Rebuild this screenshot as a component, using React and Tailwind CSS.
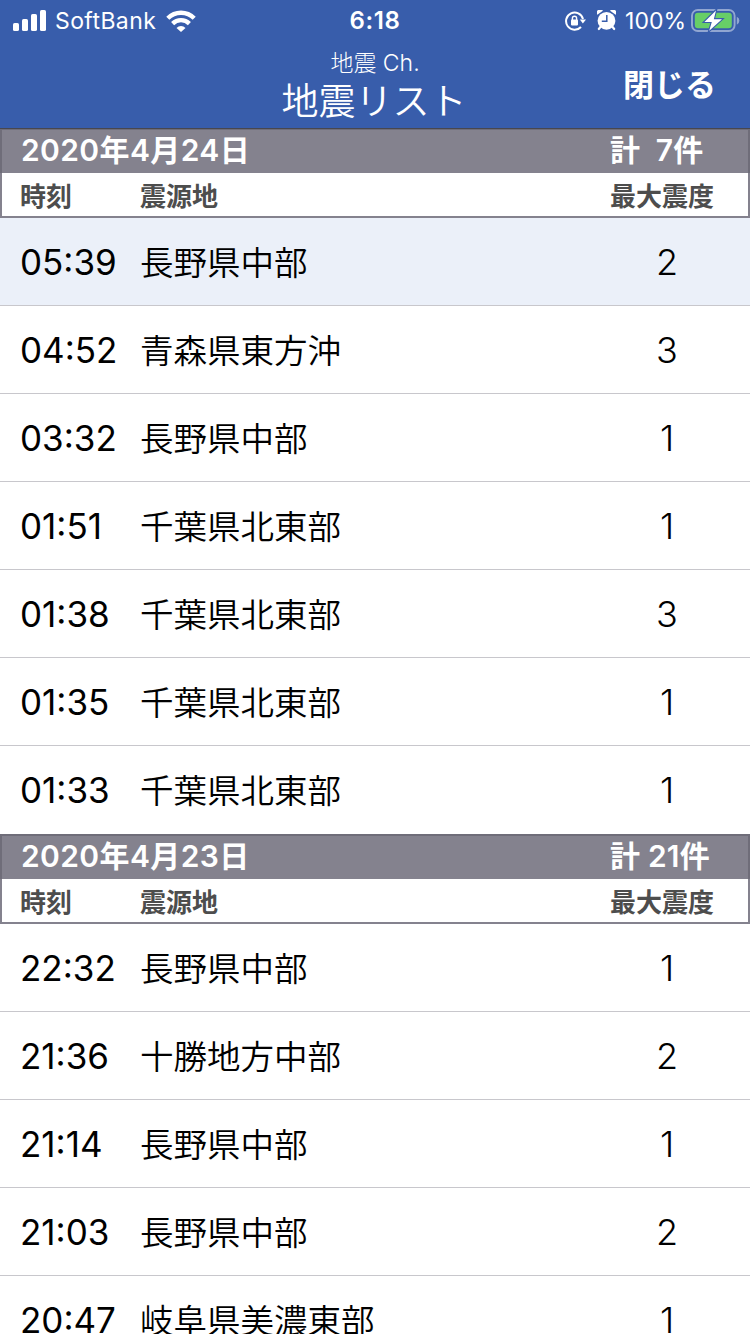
const days = [
  {
    date: '2020年4月24日',
    total: '計  7件',
    quakes: [
      { time: '05:39', place: '長野県中部', level: '2', selected: true },
      { time: '04:52', place: '青森県東方沖', level: '3' },
      { time: '03:32', place: '長野県中部', level: '1' },
      { time: '01:51', place: '千葉県北東部', level: '1' },
      { time: '01:38', place: '千葉県北東部', level: '3' },
      { time: '01:35', place: '千葉県北東部', level: '1' },
      { time: '01:33', place: '千葉県北東部', level: '1' },
    ],
  },
  {
    date: '2020年4月23日',
    total: '計 21件',
    quakes: [
      { time: '22:32', place: '長野県中部', level: '1' },
      { time: '21:36', place: '十勝地方中部', level: '2' },
      { time: '21:14', place: '長野県中部', level: '1' },
      { time: '21:03', place: '長野県中部', level: '2' },
      { time: '20:47', place: '岐阜県美濃東部', level: '1' },
    ],
  },
];

function SignalIcon() {
  return (
    <svg width="34" height="22" viewBox="0 0 34 22" fill="white">
      <rect x="0" y="13" width="6" height="8" rx="1.6" />
      <rect x="9" y="9" width="6" height="12" rx="1.6" />
      <rect x="18" y="4" width="6" height="17" rx="1.6" />
      <rect x="27" y="0" width="6" height="21" rx="1.6" />
    </svg>
  );
}

function WifiIcon() {
  return (
    <svg width="30" height="22" viewBox="0 0 30 22" fill="none" stroke="white" strokeWidth="4.4">
      <path d="M1.8 8.2a18.8 18.8 0 0 1 26.4 0" />
      <path d="M6.6 13.6a12 12 0 0 1 16.8 0" />
      <path d="M15 22l-4.5-4.1a6.3 6.3 0 0 1 9 0z" fill="white" stroke="none" />
    </svg>
  );
}

function RotationLockIcon() {
  return (
    <svg width="21" height="20" viewBox="0 0 21 20" fill="none" stroke="white">
      <path d="M18 8A8.6 8.6 0 1 0 16 16" strokeWidth="2" />
      <path d="M14.8 8.4H21l-3.1 4.2z" fill="white" stroke="none" />
      <rect x="6" y="8.6" width="7" height="5.8" rx="0.8" fill="white" stroke="none" />
      <path d="M7.4 9V7.4a2.1 2.1 0 0 1 4.2 0V9" strokeWidth="1.4" />
    </svg>
  );
}

function AlarmIcon() {
  return (
    <svg width="19" height="22" viewBox="0 0 19 22" fill="none">
      <circle cx="9.5" cy="10.8" r="8.9" fill="white" />
      <path d="M0.3 4.8a3.3 3.3 0 0 1 5.6-4zM18.7 4.8a3.3 3.3 0 0 0-5.6-4z" fill="white" />
      <path d="M3.4 17l-1.6 2M15.6 17l1.6 2" stroke="white" strokeWidth="2.2" strokeLinecap="round" />
      <path d="M9.8 5v6.2H4.8" stroke="#385dab" strokeWidth="1.5" />
    </svg>
  );
}

function BatteryIcon() {
  return (
    <svg width="50" height="24" viewBox="0 0 50 24">
      <rect x="1" y="1" width="42.6" height="21" rx="5.8" fill="none" stroke="white" strokeOpacity="0.45" strokeWidth="1.9" />
      <path d="M45.8 7.8a4.4 4.4 0 0 1 0 8z" fill="white" fillOpacity="0.45" />
      <rect x="3.8" y="3.8" width="37" height="15.4" rx="3.2" fill="#67ce67" />
      <path
        d="M25 1.4L13.4 13h7.4l-2.6 8.8L31 10.2h-8.2z"
        fill="white"
        stroke="#385dab"
        strokeWidth="2.2"
        paintOrder="stroke"
      />
    </svg>
  );
}

function StatusBar() {
  return (
    <div className="grid h-10 grid-cols-[1fr_auto_1fr] items-center pl-[13px] pr-[9px] text-[23px] leading-10">
      <div className="flex items-center">
        <SignalIcon />
        <span className="ml-2 mr-2 w-[103px] whitespace-nowrap pt-px tracking-[0.4px]">SoftBank</span>
        <WifiIcon />
      </div>
      <div className="-ml-1 pt-px text-[24px] font-semibold tracking-[0.6px]">6:18</div>
      <div className="flex items-center justify-end">
        <RotationLockIcon />
        <span className="ml-[11px] block">
          <AlarmIcon />
        </span>
        <span className="ml-[9px] mr-[5px] whitespace-nowrap pt-px">100%</span>
        <BatteryIcon />
      </div>
    </div>
  );
}

function Header() {
  return (
    <header className="relative h-32 bg-[#385dab] text-white shadow-[0_1px_0_rgba(0,0,0,0.35)]">
      <StatusBar />
      <div className="grid grid-cols-[1fr_auto_1fr]">
        <div />
        <div className="pt-2 text-center font-light">
          <p className="text-[23px] leading-[30px]">地震 Ch.</p>
          <h1 className="-ml-0.5 text-[37px] font-[350] leading-[47px]">地震リスト</h1>
        </div>
        <button className="h-[90px] justify-self-end pr-[34px] text-[31px] font-semibold">閉じる</button>
      </div>
    </header>
  );
}

function DayHeader({ date, total }) {
  return (
    <div className="h-[90px] border-2 border-[#84828e] bg-white font-semibold">
      <div className="-mx-0.5 -mt-0.5 flex h-[45px] border-x-2 border-t-2 border-[#6f6d79] bg-[#84828e] text-[30px] leading-10 text-white">
        <div className="w-[608px] pl-[19px] tracking-[0.4px]">{date}</div>
        <div className="whitespace-pre tracking-[0.2px]">{total}</div>
      </div>
      <div className="flex h-[43px] text-[26px] leading-[48px] text-[#4d4d4d]">
        <div className="w-[119px] pl-[18px]">時刻</div>
        <div className="w-[470px] pl-[19px]">震源地</div>
        <div className="pl-[19px]">最大震度</div>
      </div>
    </div>
  );
}

function QuakeRow({ quake }) {
  return (
    <li className={`flex h-[88px] items-center border-b border-[#c8c7cc] text-black ${quake.selected ? 'bg-[#ebf0f9]' : 'bg-white'} last:border-transparent`}>
      <div className="w-[120px] pl-5 pt-px text-[35px]">{quake.time}</div>
      <div className="w-[467px] pl-5 pt-[3px] text-[33.5px] font-[350]">{quake.place}</div>
      <div className="w-[160px] pt-px text-center text-[36px] font-light">{quake.level}</div>
    </li>
  );
}

export default function App() {
  return (
    <div className="h-[1334px] w-[750px] overflow-hidden bg-white font-[Inter,'Noto_Sans_CJK_JP',sans-serif]">
      <Header />
      {days.map((day) => (
        <section key={day.date}>
          <DayHeader date={day.date} total={day.total} />
          <ul>
            {day.quakes.map((quake) => (
              <QuakeRow key={quake.time} quake={quake} />
            ))}
          </ul>
        </section>
      ))}
    </div>
  );
}
